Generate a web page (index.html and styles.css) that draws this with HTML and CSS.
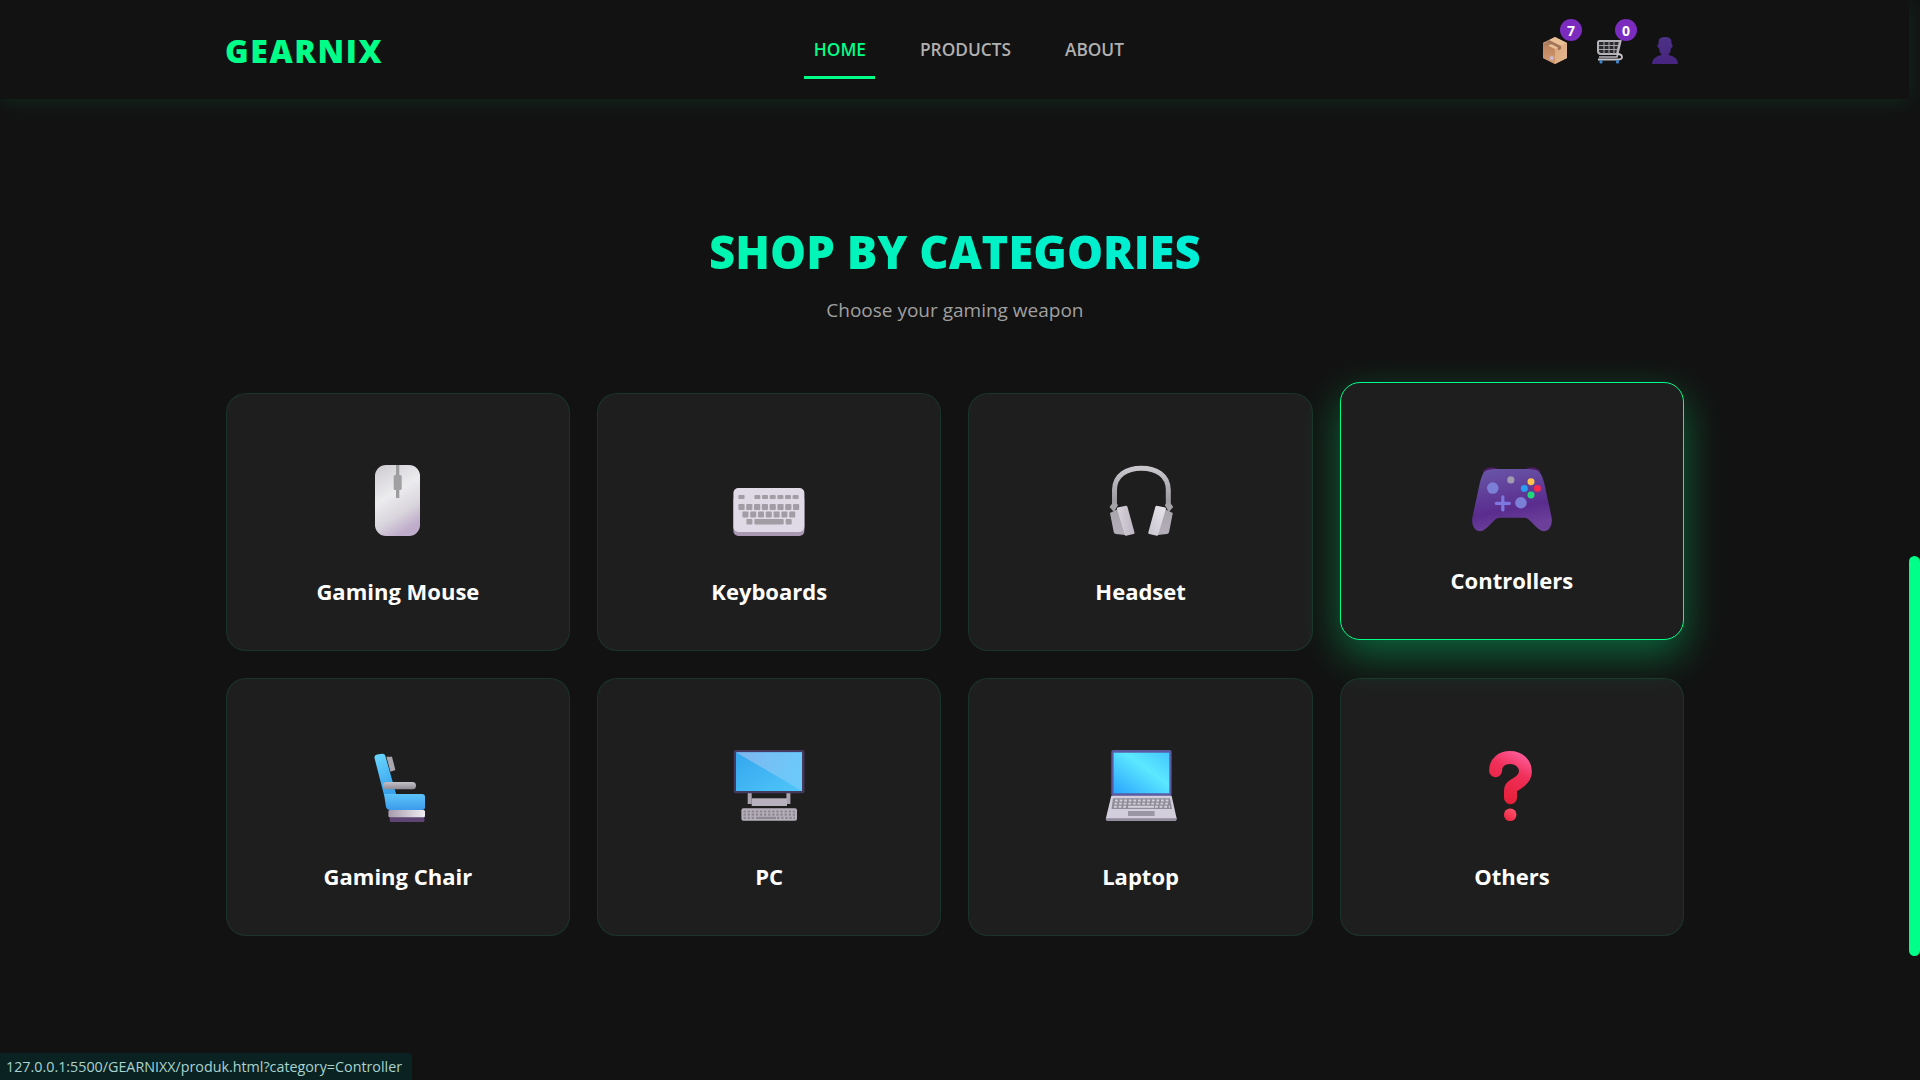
FILE: index.html
```html
<!DOCTYPE html>
<html lang="en">
<head>
<meta charset="utf-8">
<title>GEARNIX</title>
<link rel="stylesheet" href="styles.css">
</head>
<body>
<svg class="defs" width="0" height="0" aria-hidden="true">
  <defs>
    <linearGradient id="gMouse" x1="0.1" y1="0" x2="0.5" y2="1"><stop offset="0" stop-color="#cfcdd2"/><stop offset=".45" stop-color="#ecebee"/><stop offset=".75" stop-color="#d9d5dc"/><stop offset="1" stop-color="#bfaccb"/></linearGradient>
    <linearGradient id="gBand" x1="0" y1="0" x2="0" y2="1"><stop offset="0" stop-color="#c9c7cc"/><stop offset="1" stop-color="#98959c"/></linearGradient>
    <linearGradient id="gPad" x1="0" y1="0" x2="0" y2="1"><stop offset="0" stop-color="#a8a5ac"/><stop offset="1" stop-color="#b5aeb9"/></linearGradient>
    <linearGradient id="gPad2" x1="0" y1="0" x2="1" y2="0"><stop offset="0" stop-color="#d8d3dc"/><stop offset="1" stop-color="#bcb6c2"/></linearGradient>
    <linearGradient id="gPad3" x1="1" y1="0" x2="0" y2="1"><stop offset="0" stop-color="#e9e6ec"/><stop offset="1" stop-color="#c9c4cf"/></linearGradient>
    <linearGradient id="gCtl" x1="0" y1="0" x2="0.25" y2="1"><stop offset="0" stop-color="#6a58a9"/><stop offset=".72" stop-color="#5a2c8e"/><stop offset="1" stop-color="#6c3f9b"/></linearGradient>
    <linearGradient id="gBack" x1="0" y1="0" x2="0.3" y2="1"><stop offset="0" stop-color="#6bd9ff"/><stop offset="1" stop-color="#3aa3ee"/></linearGradient>
    <linearGradient id="gArm" x1="0" y1="0" x2="0" y2="1"><stop offset="0" stop-color="#c5c1c9"/><stop offset="1" stop-color="#8f8b94"/></linearGradient>
    <linearGradient id="gSeat" x1="0" y1="0" x2="0" y2="1"><stop offset="0" stop-color="#5cc4f8"/><stop offset="1" stop-color="#3c9bec"/></linearGradient>
    <linearGradient id="gBase" x1="0" y1="0" x2="1" y2="0"><stop offset="0" stop-color="#a59bad"/><stop offset="1" stop-color="#f0edf2"/></linearGradient>
    <linearGradient id="gScr" x1="0" y1="0" x2="1" y2="1"><stop offset="0" stop-color="#33a6ee"/><stop offset="1" stop-color="#50c6f9"/></linearGradient>
    <linearGradient id="gScr2" x1="0" y1="0" x2="1" y2="0.3"><stop offset="0" stop-color="#7fb6ee"/><stop offset="1" stop-color="#6cc9fa"/></linearGradient>
    <linearGradient id="gLap" x1="0" y1="1" x2="1" y2="0"><stop offset="0" stop-color="#2aa4ff"/><stop offset=".6" stop-color="#5ce8ff"/><stop offset="1" stop-color="#44c6ff"/></linearGradient>
    <linearGradient id="gQ" gradientUnits="userSpaceOnUse" x1="50" y1="4" x2="26" y2="50"><stop offset="0" stop-color="#ff5f9e"/><stop offset=".4" stop-color="#f0305a"/><stop offset="1" stop-color="#e61f38"/></linearGradient>
    <linearGradient id="gDot" x1="0.8" y1="0" x2="0.2" y2="1"><stop offset="0" stop-color="#ff5470"/><stop offset="1" stop-color="#ec2440"/></linearGradient>
    <linearGradient id="gBoxL" x1="0" y1="0" x2="0" y2="1"><stop offset="0" stop-color="#b8805a"/><stop offset="1" stop-color="#d59c72"/></linearGradient>
    <linearGradient id="gBoxR" x1="0" y1="0" x2="1" y2="1"><stop offset="0" stop-color="#dba77c"/><stop offset="1" stop-color="#e5b78e"/></linearGradient>
    <linearGradient id="gUser" x1="0" y1="0" x2="0" y2="1"><stop offset="0" stop-color="#4c3186"/><stop offset="1" stop-color="#472580"/></linearGradient>
  </defs>
</svg>

<header class="topbar">
  <a class="logo">GEARNIX</a>
  <nav class="mainnav">
    <a class="navlink active">HOME</a>
    <a class="navlink">PRODUCTS</a>
    <a class="navlink">ABOUT</a>
  </nav>
  <div class="tools">
    <a class="tool">
      <svg width="24" height="27" viewBox="0 0 24 27">
        <path d="M12 0 L24 6 V21 L12 27 L0 21 V6Z" fill="#c8936a"/>
        <path d="M12 12 L24 6 V21 L12 27Z" fill="url(#gBoxR)"/>
        <path d="M0 6 L12 12 V27 L0 21Z" fill="url(#gBoxL)"/>
        <path d="M12 0 L24 6 L12 12 L0 6Z" fill="#e9bf96"/>
        <path d="M6 3 L18 9 L18 12 L15 13.5 L15 10.5 L3 4.5Z" fill="#96674f" opacity=".85"/>
        <path d="M4.5 9 L0 6.5 L4 4.5 L9 7Z" fill="#96674f" opacity=".7"/>
        <rect x="7" y="19" width="3.4" height="4" fill="#cdb8d0" transform="rotate(25 8.7 21)"/>
      </svg>
      <span class="badge">7</span>
    </a>
    <a class="tool">
      <svg width="26" height="25" viewBox="0 0 26 25">
        <path d="M24 1 L20 18 H2" fill="none" stroke="#b9b6bc" stroke-width="1.6"/>
        <path d="M2.5 2 H23 L20 15 H4 Q1 15 1 12 V4 Q1 2 2.5 2Z" fill="#2a2a2c" stroke="#b5b2b8" stroke-width="2"/>
        <path d="M7 2 V15 M12 2 V15 M17 2 V15 M1 6.5 H22 M1 10.5 H21" fill="none" stroke="#a8a5ab" stroke-width="1"/>
        <path d="M20 15 Q25 15 25 18 Q25 20.5 21 20.5 H1" fill="none" stroke="#c5c2c9" stroke-width="1.8"/>
        <rect x="2.5" y="21" width="3" height="3.6" rx="1" fill="#3f84c9"/>
        <rect x="19" y="21" width="3" height="3.6" rx="1" fill="#3f84c9"/>
      </svg>
      <span class="badge">0</span>
    </a>
    <a class="tool">
      <svg width="26" height="27" viewBox="0 0 26 27">
        <path d="M6.5 5 Q6.5 0 13 0 Q19.5 0 19.5 5 V7 Q21 7 20.5 9.5 Q20 11 19 11 Q19 15 16.5 17.5 V18 Q26 20 26 27 H0 Q0 20 9.5 18 V17.5 Q7 15 7 11 Q6 11 5.5 9.5 Q5 7 6.5 7Z" fill="url(#gUser)"/>
      </svg>
    </a>
  </div>
</header>

<main class="content">
  <h1 class="title">SHOP BY CATEGORIES</h1>
  <p class="subtitle">Choose your gaming weapon</p>

  <section class="grid">
    <a class="card">
      <svg class="emoji" viewBox="0 0 72 72">
        <rect x="13" y="0" width="45" height="71" rx="11" fill="url(#gMouse)"/>
        <rect x="34" y="0" width="3.3" height="33" fill="#9c9c9e"/>
        <rect x="31.7" y="10" width="8" height="15" rx="1.5" fill="#a0a0a2"/>
      </svg>
      <span class="label">Gaming Mouse</span>
    </a>
    <a class="card">
      <svg class="emoji" viewBox="0 0 72 72">
        <rect x="0.4" y="30" width="71" height="41" rx="5" fill="#a999b3"/>
        <rect x="0.4" y="23" width="71" height="44" rx="5" fill="#e0d9e6"/>
        <g fill="#a19da5">
          <rect x="5.4" y="30" width="6.2" height="4" rx="1"/>
          <rect x="21.4" y="30" width="6" height="4" rx="1"/><rect x="29" y="30" width="6" height="4" rx="1"/><rect x="36.7" y="30" width="6" height="4" rx="1"/><rect x="44.4" y="30" width="6" height="4" rx="1"/><rect x="52" y="30" width="6" height="4" rx="1"/><rect x="59.6" y="30" width="6" height="4" rx="1"/>
          <rect x="5.4" y="39" width="6.2" height="6" rx="1"/><rect x="13.2" y="39" width="6.2" height="6" rx="1"/><rect x="21" y="39" width="6.2" height="6" rx="1"/><rect x="28.8" y="39" width="6.2" height="6" rx="1"/><rect x="36.6" y="39" width="6.2" height="6" rx="1"/><rect x="44.4" y="39" width="6.2" height="6" rx="1"/><rect x="52.2" y="39" width="6.2" height="6" rx="1"/><rect x="60" y="39" width="6.2" height="6" rx="1"/>
          <rect x="9.4" y="46.5" width="6" height="6" rx="1"/><rect x="17.2" y="46.5" width="6" height="6" rx="1"/><rect x="25" y="46.5" width="6" height="6" rx="1"/><rect x="32.8" y="46.5" width="6" height="6" rx="1"/><rect x="40.6" y="46.5" width="6" height="6" rx="1"/><rect x="48.4" y="46.5" width="6" height="6" rx="1"/><rect x="56.2" y="46.5" width="6" height="6" rx="1"/>
          <rect x="13.4" y="54" width="6" height="5.5" rx="1"/><rect x="21.4" y="54" width="29.3" height="5.5" rx="1"/><rect x="52.7" y="54" width="6" height="5.5" rx="1"/>
        </g>
      </svg>
      <span class="label">Keyboards</span>
    </a>
    <a class="card">
      <svg class="emoji" viewBox="0 0 72 72">
        <path d="M9.5 40 V25 C9.5 10 22 3.2 36.4 3.2 C51 3.2 63.3 10 63.3 25 V40" fill="none" stroke="url(#gBand)" stroke-width="5"/>
        <path d="M4.5 42 L9 36 L13 40 L9 47Z M68.3 42 L63.8 36 L59.8 40 L63.8 47Z" fill="#a4a1a7"/>
        <path d="M5 48 L13 44 L20 70 L11 69 Q9 69 8.5 66Z" fill="url(#gPad)"/>
        <path d="M67.8 48 L59.8 44 L52.8 70 L61.8 69 Q63.8 69 64.3 66Z" fill="url(#gPad)"/>
        <path d="M12.5 42.5 L21 40.7 Q22 40.5 22.5 42 L29.5 67.5 Q29.8 68.8 28.5 69 L21 70.7 Q20 71 19.5 69.5 L12 44 Q11.8 43 12.5 42.5Z" fill="url(#gPad2)"/>
        <path d="M60.3 42.5 L51.8 40.7 Q50.8 40.5 50.3 42 L43.3 67.5 Q43 68.8 44.3 69 L51.8 70.7 Q52.8 71 53.3 69.5 L60.8 44 Q61 43 60.3 42.5Z" fill="url(#gPad3)"/>
      </svg>
      <span class="label">Headset</span>
    </a>
    <a class="card hover">
      <svg class="emoji" viewBox="0 0 72 72">
        <ellipse cx="18.5" cy="20.5" rx="7.5" ry="3.8" fill="#4f1c66"/>
        <ellipse cx="53" cy="20.5" rx="7.5" ry="3.8" fill="#4f1c66"/>
        <path d="M12 20.5 C14.5 18.8 18 18 22 18 H50 C54 18 57 18.8 59.5 20.5 C62 23 63 27 64 31 L70 59 C71.5 66 68 71.5 63.5 71.5 C60 71.5 57 68 52 63 C50 60.8 48.5 60 46 60 H26 C23.5 60 22 60.8 20 63 C15 68 12 71.5 8.5 71.5 C4 71.5 0.5 66 2 59 L8 31 C9 27 10 23 12 20.5Z" fill="url(#gCtl)"/>
        <circle cx="19.4" cy="34.3" r="5" fill="#7b7fd6"/>
        <circle cx="43.7" cy="47" r="5" fill="#7b7fd6"/>
        <circle cx="35" cy="27.3" r="3.1" fill="#a199ad"/>
        <circle cx="52.4" cy="28.8" r="3" fill="#fdc24b"/>
        <circle cx="57.9" cy="34.6" r="3" fill="#f8274d"/>
        <circle cx="46.6" cy="34.6" r="3" fill="#2a9df4"/>
        <circle cx="52.4" cy="40.4" r="3" fill="#20d87a"/>
        <path d="M28.1 42 V53.2 M22.5 47.6 H33.7" stroke="#7d78e0" stroke-width="2.8" stroke-linecap="round"/>
      </svg>
      <span class="label">Controllers</span>
    </a>
    <a class="card">
      <svg class="emoji" viewBox="0 0 72 72">
        <path d="M24.4 6.7 L30 6.7 L33.4 20 L28.4 21.7Z" fill="#aaa6ae"/>
        <path d="M12.5 8 Q12 5 15 4.5 L20 3.7 Q23 3.5 23.5 6.5 L34.4 45 H22 Z" fill="url(#gBack)"/>
        <path d="M22 44 H60 Q63 44 63 47 V57 Q63 60 60 60 H28 Q25 60 24 57Z" fill="url(#gSeat)"/>
        <rect x="21" y="32" width="33" height="7.3" rx="3.6" fill="url(#gArm)"/>
        <rect x="27.7" y="62" width="34.7" height="10.7" rx="2.5" fill="#5d4472"/>
        <rect x="26.4" y="60" width="36.6" height="7.3" rx="1.5" fill="url(#gBase)"/>
      </svg>
      <span class="label">Gaming Chair</span>
    </a>
    <a class="card">
      <svg class="emoji" viewBox="0 0 72 72">
        <rect x="14.7" y="43" width="4" height="11" fill="#a9a3af"/><rect x="53.4" y="43" width="4" height="11" fill="#a9a3af"/>
        <rect x="18.7" y="48.3" width="35.3" height="7.7" fill="#b7b0bd"/>
        <rect x="0.7" y="0" width="70.7" height="43.3" rx="2" fill="#453a5e"/>
        <rect x="3" y="2.3" width="66" height="38.7" fill="url(#gScr)"/>
        <path d="M3 2.3 H69 V41Z" fill="url(#gScr2)"/>
        <rect x="8.4" y="58.3" width="55.6" height="12.4" rx="2" fill="#b5afba"/>
        <g stroke="#8d8993" stroke-width="2.2" stroke-dasharray="2.4 1.7" fill="none">
          <path d="M10.5 61.5 H62"/><path d="M10.5 64.7 H62"/><path d="M10.5 67.9 H22 M44 67.9 H62"/>
        </g>
        <rect x="23" y="66.8" width="20" height="2.2" fill="#8d8993"/>
      </svg>
      <span class="label">PC</span>
    </a>
    <a class="card">
      <svg class="emoji" viewBox="0 0 72 72">
        <rect x="6.3" y="0" width="60.3" height="46" rx="2" fill="#5a5aa2"/>
        <rect x="8.6" y="2.7" width="55.7" height="40.6" fill="url(#gLap)"/>
        <path d="M6.3 45.7 H66.6 L71.6 68.3 V69 Q71.6 70.7 70 70.7 H2.5 Q0.9 70.7 0.9 69 V68.3Z" fill="#d3cedb"/>
        <path d="M0.9 68.3 H71.6 V69 Q71.6 70.7 70 70.7 H2.5 Q0.9 70.7 0.9 69Z" fill="#918a9e"/>
        <path d="M8 48.3 H65 L67 59 H6.5Z" fill="#8f8b98"/>
        <g stroke="#d4d0da" stroke-width="1.9" stroke-dasharray="2.8 1.8" fill="none">
          <path d="M10 50.5 H64"/><path d="M9.5 53.6 H64.5"/><path d="M9 56.8 H22 M50 56.8 H65"/>
        </g>
        <rect x="23" y="55.8" width="26" height="2" fill="#d4d0da"/>
        <rect x="23" y="61" width="26.6" height="5" fill="#9a96a3"/>
      </svg>
      <span class="label">Laptop</span>
    </a>
    <a class="card">
      <svg class="emoji" viewBox="0 0 72 72">
        <path d="M19.6 20.7 C19.6 12 26 7.5 34 7.5 C43 7.5 49.4 13.5 49.4 21.5 C49.4 28 45 31 41 33.5 C36.5 36 34.5 37 34.5 41 V47.7" fill="none" stroke="url(#gQ)" stroke-width="13" stroke-linecap="round"/>
        <circle cx="34.2" cy="64.7" r="6.3" fill="url(#gDot)"/>
      </svg>
      <span class="label">Others</span>
    </a>
  </section>
</main>

<div class="thumb"></div>
<div class="status">127.0.0.1:5500/GEARNIXX/produk.html?category=Controller</div>
</body>
</html>
```
FILE: styles.css
```css
* { box-sizing: border-box; }
html, body { margin: 0; height: 100%; }
body {
  background: #121212;
  color: #fff;
  font-family: "Open Sans", "Noto Sans", sans-serif;
  padding-right: 11px;
  overflow: hidden;
}
.defs { display: block; height: 0; }

.topbar {
  display: flex;
  align-items: center;
  height: 99px;
  padding: 0 225px;
  background: #121212;
  box-shadow: 0 2px 20px rgba(0, 255, 136, 0.1);
}
.logo {
  padding-top: 2px;
  font-size: 32px;
  font-weight: 800;
  letter-spacing: 1.6px;
  color: #00ff88;
}
.mainnav {
  display: flex;
  align-self: flex-start;
  gap: 35px;
  margin-left: 421px;
  margin-top: 20px;
}
.navlink {
  display: flex;
  align-items: center;
  height: 59px;
  padding: 2px 9.5px 0;
  font-size: 17.3px;
  font-weight: 600;
  color: #b0b0b0;
  border-bottom: 3px solid transparent;
}
.navlink.active { color: #00ff88; border-bottom-color: #00ff88; }

.tools { display: flex; gap: 17px; margin-left: auto; margin-top: 2px; }
.tool {
  position: relative;
  width: 38px;
  height: 27px;
  display: flex;
  justify-content: center;
  align-items: flex-end;
}
.badge {
  position: absolute;
  top: -18px;
  left: 24px;
  width: 22px;
  height: 22px;
  border-radius: 50%;
  background: #7b2cbf;
  color: #fff;
  font-size: 14px;
  font-weight: 700;
  display: flex;
  align-items: center;
  justify-content: center;
}

.content { padding: 122px 225px 0 225.8px; }
.title {
  margin: 0;
  text-align: center;
  font-size: 45.4px;
  line-height: 61px;
  font-weight: 800;
  background: linear-gradient(90deg, #00ff88, #00e5ff);
  background-clip: text;
  -webkit-background-clip: text;
  color: transparent;
}
.subtitle {
  margin: 15px 0 0;
  text-align: center;
  font-size: 19px;
  line-height: 27px;
  color: #a0a0a0;
}

.grid {
  display: grid;
  grid-template-columns: repeat(4, 1fr);
  gap: 27.2px;
  margin-top: 69px;
}
.card {
  height: 258px;
  display: flex;
  flex-direction: column;
  align-items: center;
  padding-top: 71px;
  background: #1e1e1e;
  border: 1px solid rgba(0, 255, 136, 0.1);
  border-radius: 20px;
}
.emoji { width: 72px; height: 72px; display: block; }
.label {
  margin-top: 39px;
  font-size: 22px;
  line-height: 30px;
  font-weight: 700;
  color: #fff;
}
.card.hover {
  transform: translateY(-11px);
  border-color: #00ff88;
  box-shadow: 0 15px 40px rgba(0, 255, 136, 0.35);
}
.card.hover .emoji { transform: scale(1.16); }

.thumb {
  position: fixed;
  top: 556px;
  right: 0;
  width: 11px;
  height: 400px;
  border-radius: 6px;
  background: #00ff88;
}
.status {
  position: fixed;
  left: 0;
  bottom: 0;
  height: 27px;
  padding: 0 10px 0 6px;
  line-height: 27px;
  font-size: 14.3px;
  color: #a9d3cf;
  background: #0a2222;
  border-top-right-radius: 4px;
}
```
